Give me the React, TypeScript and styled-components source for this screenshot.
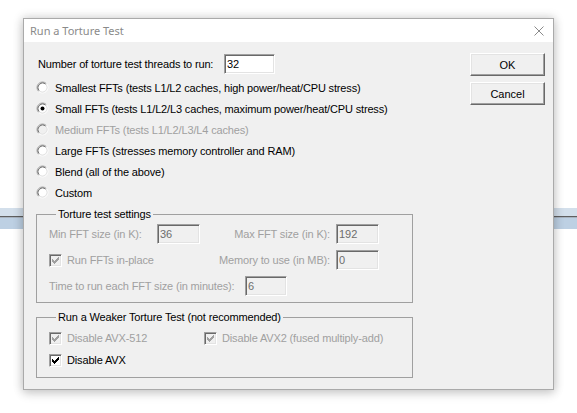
import React from 'react';
import styled, { createGlobalStyle } from 'styled-components';

const GlobalStyle = createGlobalStyle`
  html, body { margin: 0; padding: 0; background: #ffffff; }
  body { font-family: "Liberation Sans", Arial, sans-serif; }
`;

const Desktop = styled.div`
  width: 577px;
  height: 413px;
  box-sizing: border-box;
  padding: 18px 0 0 23px;
  overflow: hidden;
  background: linear-gradient(
    to bottom,
    #ffffff 0,
    #ffffff 208px,
    #d3dfeb 208px,
    #d3dfeb 216px,
    #5f5f5f 216px,
    #5f5f5f 217px,
    #a9b3bf 217px,
    #a9b3bf 218px,
    #bdd0e3 218px,
    #bdd0e3 229px,
    #ffffff 229px
  );
`;

const Window = styled.div`
  width: 531px;
  height: 372px;
  box-sizing: border-box;
  border: 1px solid #aaaaaa;
  background: #f0f0f0;
  box-shadow: 0 0 9px 1px rgba(0, 0, 0, 0.16), 0 4px 10px rgba(0, 0, 0, 0.12);
  display: flex;
  flex-direction: column;
`;

const TitleBar = styled.div`
  height: 23px;
  flex: none;
  background: #ffffff;
  display: flex;
  align-items: center;
  justify-content: space-between;
  padding: 0 9px 0 6px;
  font: 11px "Noto Sans", "Liberation Sans", sans-serif;
  color: #8a8a8a;
`;

const Client = styled.div`
  flex: 1;
  display: flex;
  justify-content: space-between;
  font-size: 11px;
  letter-spacing: -0.15px;
  color: #000;
`;

const LeftCol = styled.div`
  width: 377px;
  padding: 12px 0 0 12px;
  display: flex;
  flex-direction: column;
`;

const RightCol = styled.div`
  padding: 11px 8px 0 0;
  display: flex;
  flex-direction: column;
  gap: 6px;
`;

const ThreadsRow = styled.div`
  height: 20px;
  display: flex;
  align-items: center;
  padding-left: 2px;
`;

const ThreadsLabel = styled.span`
  width: 186px;
  flex: none;
`;

const Edit = styled.input<{ $w: number }>`
  width: ${(p) => p.$w}px;
  height: 20px;
  box-sizing: border-box;
  margin: 0;
  padding: 0 0 0 2px;
  border: 1px solid;
  border-color: #a0a0a0 #ffffff #ffffff #a0a0a0;
  box-shadow: inset 1px 1px 0 #696969, inset -1px -1px 0 #e3e3e3;
  background: ${(p) => (p.disabled ? '#f0f0f0' : '#ffffff')};
  color: ${(p) => (p.disabled ? '#6d6d6d' : '#000000')};
  font: 11px "Liberation Sans", Arial, sans-serif;
  outline: none;
  flex: none;
`;

const RadioList = styled.div`
  margin-top: 3px;
  display: flex;
  flex-direction: column;
`;

const OptionRow = styled.div<{ $disabled?: boolean }>`
  height: 21px;
  display: flex;
  align-items: center;
  gap: 6px;
  color: ${(p) => (p.$disabled ? '#a0a0a0' : '#000000')};
`;

const GroupBox = styled.fieldset<{ $top: number; $pt: number; $pb: number }>`
  margin: ${(p) => p.$top}px 0 0 0;
  width: 377px;
  min-width: 0;
  box-sizing: border-box;
  border: 1px solid #a0a0a0;
  padding: ${(p) => p.$pt}px 12px ${(p) => p.$pb}px 12px;
`;

const GroupTitle = styled.legend`
  margin-left: 7px;
  padding: 0 2px;
  height: 14px;
  line-height: 14px;
  font-size: 11px;
  color: #000;
`;

const SettingsGrid = styled.div`
  display: grid;
  grid-template-columns: 108px 43px 136px 43px;
  grid-template-rows: 20px 20px 20px;
  row-gap: 6px;
  align-items: center;
`;

const GrayLabel = styled.span<{ $right?: boolean }>`
  color: #a0a0a0;
  white-space: nowrap;
  justify-self: ${(p) => (p.$right ? 'end' : 'start')};
  padding-right: ${(p) => (p.$right ? 6 : 0)}px;
`;

const SpanCell = styled.div`
  grid-column: 1 / 3;
  display: flex;
  align-items: center;
`;

const TimeRow = styled.div`
  grid-column: 1 / -1;
  display: flex;
  align-items: center;
`;

const TimeLabel = styled(GrayLabel)`
  width: 196px;
  flex: none;
`;

const WeakGrid = styled.div`
  display: grid;
  grid-template-columns: 155px auto;
  grid-template-rows: 16px 16px;
  row-gap: 6px;
  align-items: center;
`;

const CheckRow = styled.div<{ $disabled?: boolean }>`
  display: flex;
  align-items: center;
  gap: 5px;
  white-space: nowrap;
  color: ${(p) => (p.$disabled ? '#a0a0a0' : '#000000')};
`;

const Box = styled.span<{ $disabled?: boolean }>`
  width: 13px;
  height: 13px;
  box-sizing: border-box;
  flex: none;
  border: 1px solid;
  border-color: #a0a0a0 #ffffff #ffffff #a0a0a0;
  box-shadow: inset 1px 1px 0 #696969, inset -1px -1px 0 #e3e3e3;
  background: ${(p) => (p.$disabled ? '#f0f0f0' : '#ffffff')};
  display: flex;
  align-items: center;
  justify-content: center;
`;

const Button = styled.button`
  width: 75px;
  height: 23px;
  box-sizing: border-box;
  margin: 0;
  padding: 0;
  border: 1px solid;
  border-color: #ffffff #696969 #696969 #ffffff;
  box-shadow: inset -1px -1px 0 #a0a0a0, inset 1px 1px 0 #e3e3e3;
  background: #f0f0f0;
  font: 11px "Liberation Sans", Arial, sans-serif;
  color: #000;
`;

const CHECK_COLS: [number, number][] = [
  [0, 2], [1, 3], [2, 4], [3, 3], [4, 2], [5, 1], [6, 0],
];

const CheckBox = ({ disabled }: { disabled?: boolean }) => (
  <Box $disabled={disabled}>
    <svg width="7" height="7" viewBox="0 0 7 7" shapeRendering="crispEdges">
      {CHECK_COLS.map(([x, y]) => (
        <rect key={x} x={x} y={y} width="1" height="3" fill={disabled ? '#a0a0a0' : '#000000'} />
      ))}
    </svg>
  </Box>
);

const Radio = ({ checked, disabled }: { checked?: boolean; disabled?: boolean }) => (
  <svg width="13" height="13" viewBox="0 0 13 13" style={{ flex: 'none' }}>
    <circle cx="6.5" cy="6.5" r="4.2" fill={disabled ? '#f0f0f0' : '#ffffff'} />
    <path d="M2.61 10.39 A5.5 5.5 0 0 1 10.39 2.61" stroke="#a0a0a0" fill="none" />
    <path d="M10.39 2.61 A5.5 5.5 0 0 1 2.61 10.39" stroke="#ffffff" fill="none" />
    <path d="M3.32 9.68 A4.5 4.5 0 0 1 9.68 3.32" stroke="#696969" fill="none" />
    <path d="M9.68 3.32 A4.5 4.5 0 0 1 3.32 9.68" stroke="#e3e3e3" fill="none" />
    {checked && <circle cx="6.5" cy="6.5" r="2" fill="#000000" />}
  </svg>
);

const CloseIcon = () => (
  <svg width="10" height="10" viewBox="0 0 10 10">
    <path d="M0.5 0.5 L9.5 9.5 M9.5 0.5 L0.5 9.5" stroke="#8a8a8a" strokeWidth="1" fill="none" />
  </svg>
);

const options = [
  { label: 'Smallest FFTs (tests L1/L2 caches, high power/heat/CPU stress)' },
  { label: 'Small FFTs (tests L1/L2/L3 caches, maximum power/heat/CPU stress)', checked: true },
  { label: 'Medium FFTs (tests L1/L2/L3/L4 caches)', disabled: true },
  { label: 'Large FFTs (stresses memory controller and RAM)' },
  { label: 'Blend (all of the above)' },
  { label: 'Custom' },
];

export default function App() {
  return (
    <>
      <GlobalStyle />
      <Desktop>
        <Window>
          <TitleBar>
            <span>Run a Torture Test</span>
            <CloseIcon />
          </TitleBar>
          <Client>
            <LeftCol>
              <ThreadsRow>
                <ThreadsLabel>Number of torture test threads to run:</ThreadsLabel>
                <Edit $w={51} readOnly value="32" />
              </ThreadsRow>
              <RadioList>
                {options.map((o) => (
                  <OptionRow key={o.label} $disabled={o.disabled}>
                    <Radio checked={o.checked} disabled={o.disabled} />
                    <span>{o.label}</span>
                  </OptionRow>
                ))}
              </RadioList>
              <GroupBox $top={4} $pt={3} $pb={6}>
                <GroupTitle>Torture test settings</GroupTitle>
                <SettingsGrid>
                  <GrayLabel>Min FFT size (in K):</GrayLabel>
                  <Edit $w={43} disabled readOnly value="36" />
                  <GrayLabel $right>Max FFT size (in K):</GrayLabel>
                  <Edit $w={43} disabled readOnly value="192" />
                  <SpanCell>
                    <CheckRow $disabled>
                      <CheckBox disabled />
                      <span>Run FFTs in-place</span>
                    </CheckRow>
                  </SpanCell>
                  <GrayLabel $right>Memory to use (in MB):</GrayLabel>
                  <Edit $w={43} disabled readOnly value="0" />
                  <TimeRow>
                    <TimeLabel>Time to run each FFT size (in minutes):</TimeLabel>
                    <Edit $w={42} disabled readOnly value="6" />
                  </TimeRow>
                </SettingsGrid>
              </GroupBox>
              <GroupBox $top={7} $pt={6} $pb={9}>
                <GroupTitle>Run a Weaker Torture Test (not recommended)</GroupTitle>
                <WeakGrid>
                  <CheckRow $disabled>
                    <CheckBox disabled />
                    <span>Disable AVX-512</span>
                  </CheckRow>
                  <CheckRow $disabled>
                    <CheckBox disabled />
                    <span>Disable AVX2 (fused multiply-add)</span>
                  </CheckRow>
                  <CheckRow>
                    <CheckBox />
                    <span>Disable AVX</span>
                  </CheckRow>
                </WeakGrid>
              </GroupBox>
            </LeftCol>
            <RightCol>
              <Button>OK</Button>
              <Button>Cancel</Button>
            </RightCol>
          </Client>
        </Window>
      </Desktop>
    </>
  );
}
